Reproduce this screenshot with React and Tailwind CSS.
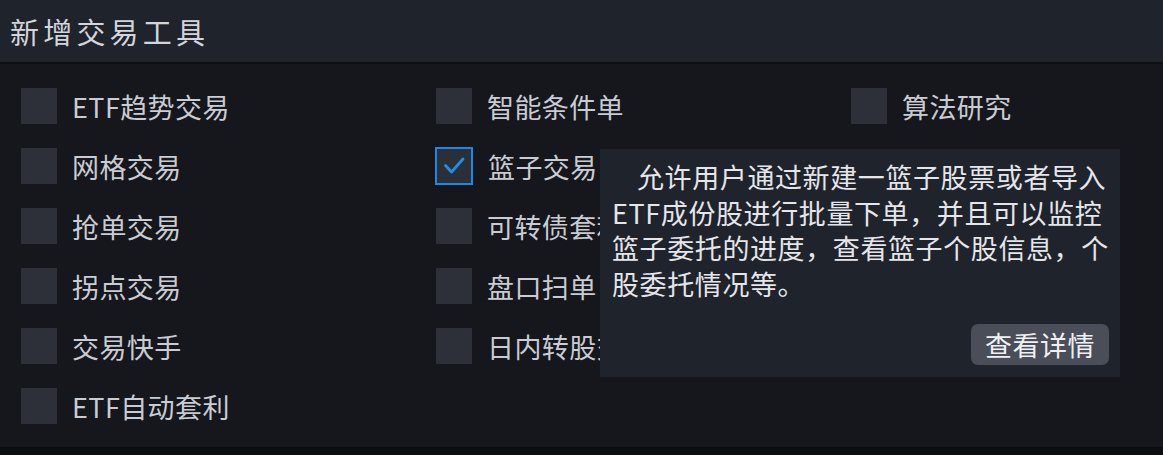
import React from "react";

const font = { fontFamily: '"Noto Sans CJK SC", "Noto Sans", sans-serif' };

function Box({ checked }) {
  if (checked) {
    return (
      <div className="w-[38px] h-[38px] -ml-[1px] -my-[1px] border-2 border-[#1b8ae6] bg-[#2b2f38] flex items-center justify-center shrink-0">
        <svg width="28" height="28" viewBox="0 0 28 28" fill="none">
          <path d="M5.5 13.5 L11.5 20 L23 7" stroke="#1e8fe8" strokeWidth="2.8" strokeLinecap="round" strokeLinejoin="round" />
        </svg>
      </div>
    );
  }
  return <div className="w-[36px] h-[36px] bg-[#2d3038] shrink-0" />;
}

function Item({ label, checked }) {
  return (
    <div className="flex items-center h-[36px] gap-[15px]">
      <Box checked={checked} />
      <span className="text-[27px] tracking-[0.4px] leading-none text-[#c9ccd3] whitespace-nowrap">{label}</span>
    </div>
  );
}

export default function App() {
  const col1 = ["ETF趋势交易", "网格交易", "抢单交易", "拐点交易", "交易快手", "ETF自动套利"];
  const col2 = [
    { l: "智能条件单" },
    { l: "篮子交易", c: true },
    { l: "可转债套利" },
    { l: "盘口扫单" },
    { l: "日内转股交易" },
  ];
  return (
    <div className="w-[1163px] h-[455px] bg-[#0d0e11] flex flex-col overflow-hidden" style={font}>
      <div className="h-[62px] bg-[#1f232c] flex items-center pl-[10px] shrink-0">
        <span className="text-[29px] tracking-[4.2px] text-[#d2d5db] leading-none">新增交易工具</span>
      </div>
      <div className="h-[2px] bg-[#0e1014] shrink-0" />
      <div className="relative h-[383px] bg-[#15171c] flex pl-[21px] pt-[24px] shrink-0">
        <div className="w-[415px] flex flex-col gap-[24px]">
          {col1.map((l) => (
            <Item key={l} label={l} />
          ))}
        </div>
        <div className="w-[415px] flex flex-col gap-[24px]">
          {col2.map((x) => (
            <Item key={x.l} label={x.l} checked={x.c} />
          ))}
        </div>
        <div className="w-[300px] flex flex-col gap-[24px]">
          <Item label="算法研究" />
        </div>

        <div className="absolute left-[600px] top-[85px] w-[520px] h-[228px] bg-[#1f232b] pl-[12px] pr-[11px] pt-[10px] pb-[12px] flex flex-col">
          <div className="text-[27px] tracking-[0.6px] leading-[35.5px] text-[#e4e6ea] whitespace-nowrap">
            <div className="pl-[25px]">允许用户通过新建一篮子股票或者导入</div>
            <div>ETF成份股进行批量下单，并且可以监控</div>
            <div>篮子委托的进度，查看篮子个股信息，个</div>
            <div>股委托情况等。</div>
          </div>
          <div className="flex justify-end mt-auto">
            <div className="w-[138px] h-[41px] rounded-[7px] bg-[#4a4e59] flex items-center justify-center text-[27px] tracking-[0.5px] leading-none text-[#eef0f3]">
              查看详情
            </div>
          </div>
        </div>
      </div>
    </div>
  );
}
